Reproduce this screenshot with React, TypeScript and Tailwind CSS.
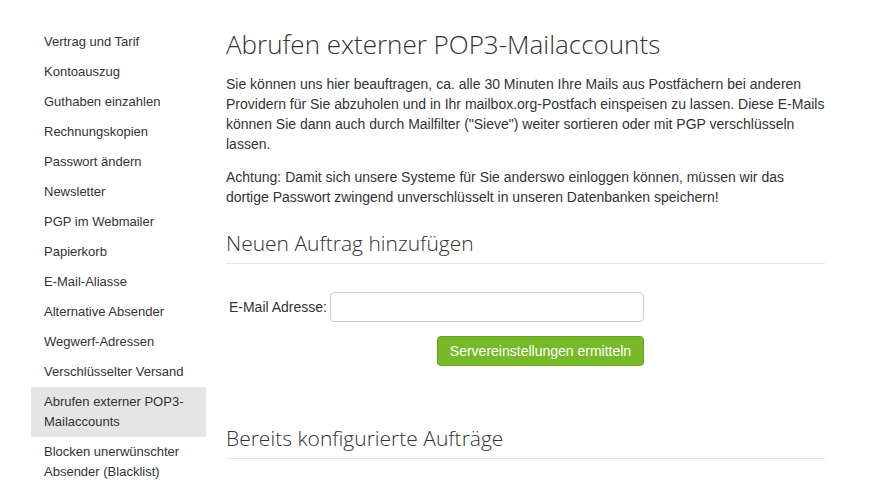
const NAV_ITEMS = [
  'Vertrag und Tarif',
  'Kontoauszug',
  'Guthaben einzahlen',
  'Rechnungskopien',
  'Passwort ändern',
  'Newsletter',
  'PGP im Webmailer',
  'Papierkorb',
  'E-Mail-Aliasse',
  'Alternative Absender',
  'Wegwerf-Adressen',
  'Verschlüsselter Versand',
  'Abrufen externer POP3-Mailaccounts',
  'Blocken unerwünschter Absender (Blacklist)',
];

const ACTIVE = 'Abrufen externer POP3-Mailaccounts';

const sans = { fontFamily: '"Liberation Sans", Arial, sans-serif' };
const light = { fontFamily: '"Open Sans", sans-serif' };

export default function App() {
  return (
    <div className="min-h-screen bg-white text-[#333] text-[14px] leading-[20px]" style={sans}>
      <div className="flex gap-5 pl-[31px] pt-[27px]">
        {/* Sidebar */}
        <nav className="w-[175px] shrink-0">
          <ul className="text-[13px] leading-[20px]">
            {NAV_ITEMS.map((item) => (
              <li
                key={item}
                className={
                  item === ACTIVE
                    ? 'px-[13px] py-[5px] bg-[#e5e5e5]'
                    : 'px-[13px] py-[5px]'
                }
              >
                {item}
              </li>
            ))}
          </ul>
        </nav>

        {/* Content */}
        <main className="w-[599px]">
          <h1 className="text-[26px] leading-[32px] font-light mt-[1px] mb-[14px]" style={light}>
            Abrufen externer POP3-Mailaccounts
          </h1>
          <p className="mb-[13px]">
            Sie können uns hier beauftragen, ca. alle 30 Minuten Ihre Mails aus Postfächern bei anderen
            Providern für Sie abzuholen und in Ihr mailbox.org-Postfach einspeisen zu lassen. Diese E-Mails
            können Sie dann auch durch Mailfilter ("Sieve") weiter sortieren oder mit PGP verschlüsseln
            lassen.
          </p>
          <p>
            Achtung: Damit sich unsere Systeme für Sie anderswo einloggen können, müssen wir das
            dortige Passwort zwingend unverschlüsselt in unseren Datenbanken speichern!
          </p>

          <h2
            className="mt-[23px] pb-[7px] border-b border-[#e5e5e5] text-[21px] leading-[26px] font-light"
            style={light}
          >
            Neuen Auftrag hinzufügen
          </h2>

          <form className="mt-[28px]" onSubmit={(e) => e.preventDefault()}>
            <div className="flex items-center">
              <label className="w-[104px] pr-[3px] text-right text-[14px]">E-Mail Adresse:</label>
              <input
                type="text"
                className="w-[314px] h-[30px] rounded-[4px] border border-[#ccc] px-2 outline-none"
              />
            </div>
            <div className="flex pl-[211px] mt-[14px]">
              <button
                type="submit"
                className="w-[207px] h-[30px] rounded-[4px] border border-[#64a11f] bg-[#77b928] text-white text-[14px]"
              >
                Servereinstellungen ermitteln
              </button>
            </div>
          </form>

          <h2
            className="mt-[59px] pb-[7px] border-b border-[#e5e5e5] text-[21px] leading-[26px] font-light"
            style={light}
          >
            Bereits konfigurierte Aufträge
          </h2>
        </main>
      </div>
    </div>
  );
}
